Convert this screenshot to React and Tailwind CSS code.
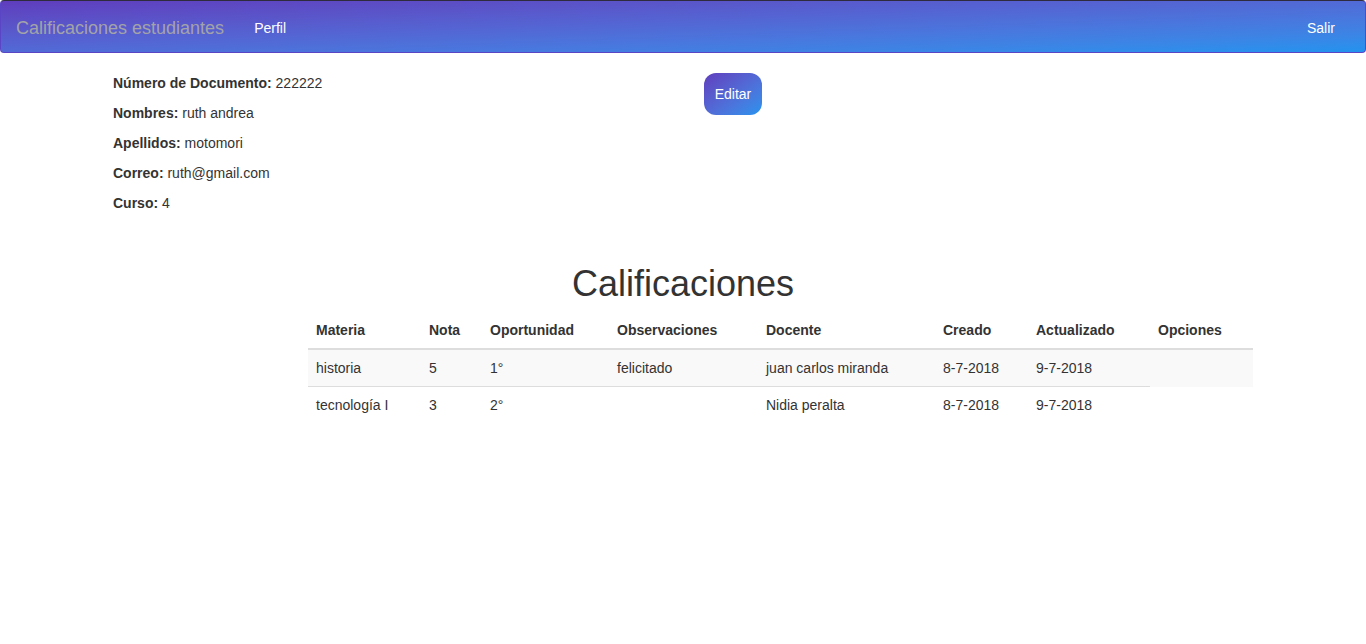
import React from "react";

const cols = [
  { label: "Materia", w: "w-[113px]" },
  { label: "Nota", w: "w-[61px]" },
  { label: "Oportunidad", w: "w-[127px]" },
  { label: "Observaciones", w: "w-[149px]" },
  { label: "Docente", w: "w-[177px]" },
  { label: "Creado", w: "w-[93px]" },
  { label: "Actualizado", w: "w-[122px]" },
  { label: "Opciones", w: "w-[103px]" },
];

const notas = [
  ["historia", "5", "1°", "felicitado", "juan carlos miranda", "8-7-2018", "9-7-2018", ""],
  ["tecnología I", "3", "2°", "", "Nidia peralta", "8-7-2018", "9-7-2018"],
];

const perfil = [
  ["Número de Documento:", "222222"],
  ["Nombres:", "ruth andrea"],
  ["Apellidos:", "motomori"],
  ["Correo:", "ruth@gmail.com"],
  ["Curso:", "4"],
];

export default function App() {
  return (
    <div className="min-h-[644px] bg-white text-[14px] leading-[20px] text-[#333] font-['Liberation_Sans',Arial,sans-serif]">
      <nav className="h-[53px] rounded-[4px] border border-[#5a46c4] border-t-[#2e2b3f] bg-gradient-to-br from-[#5f3dbd] to-[#2193ee] flex items-center justify-between">
        <div className="flex items-center pt-[2px]">
          <span className="px-[15px] pt-[1px] text-[18px] leading-[20px] text-[#a3a3a8]">Calificaciones estudiantes</span>
          <span className="px-[15px] text-white">Perfil</span>
        </div>
        <span className="pr-[30px] pt-[2px] text-white">Salir</span>
      </nav>

      <div className="mt-[20px] ml-[113px] flex">
        <div className="w-[591px]">
          {perfil.map(([k, v]) => (
            <p key={k} className="mb-[10px]">
              <b>{k}</b> {v}
            </p>
          ))}
        </div>
        <div>
          <button className="h-[42px] w-[58px] rounded-[12px] bg-gradient-to-br from-[#5f3dbd] to-[#2193ee] text-white">
            Editar
          </button>
        </div>
      </div>

      <h1 className="mt-[41px] mb-[8px] text-center text-[36px] leading-[40px] font-normal">Calificaciones</h1>

      <table className="ml-[308px] w-[945px] table-fixed border-collapse text-left">
        <thead>
          <tr>
            {cols.map((c) => (
              <th key={c.label} className={`${c.w} px-[8px] py-[8px] font-bold border-b-2 border-[#ddd]`}>
                {c.label}
              </th>
            ))}
          </tr>
        </thead>
        <tbody>
          {notas.map((row, i) => (
            <tr key={i} className={i % 2 === 0 ? "bg-[#f9f9f9]" : ""}>
              {row.map((cell, j) => (
                <td key={j} className={`px-[8px] py-[8px] ${i > 0 ? "border-t border-[#ddd]" : ""}`}>
                  {cell}
                </td>
              ))}
            </tr>
          ))}
        </tbody>
      </table>
    </div>
  );
}
